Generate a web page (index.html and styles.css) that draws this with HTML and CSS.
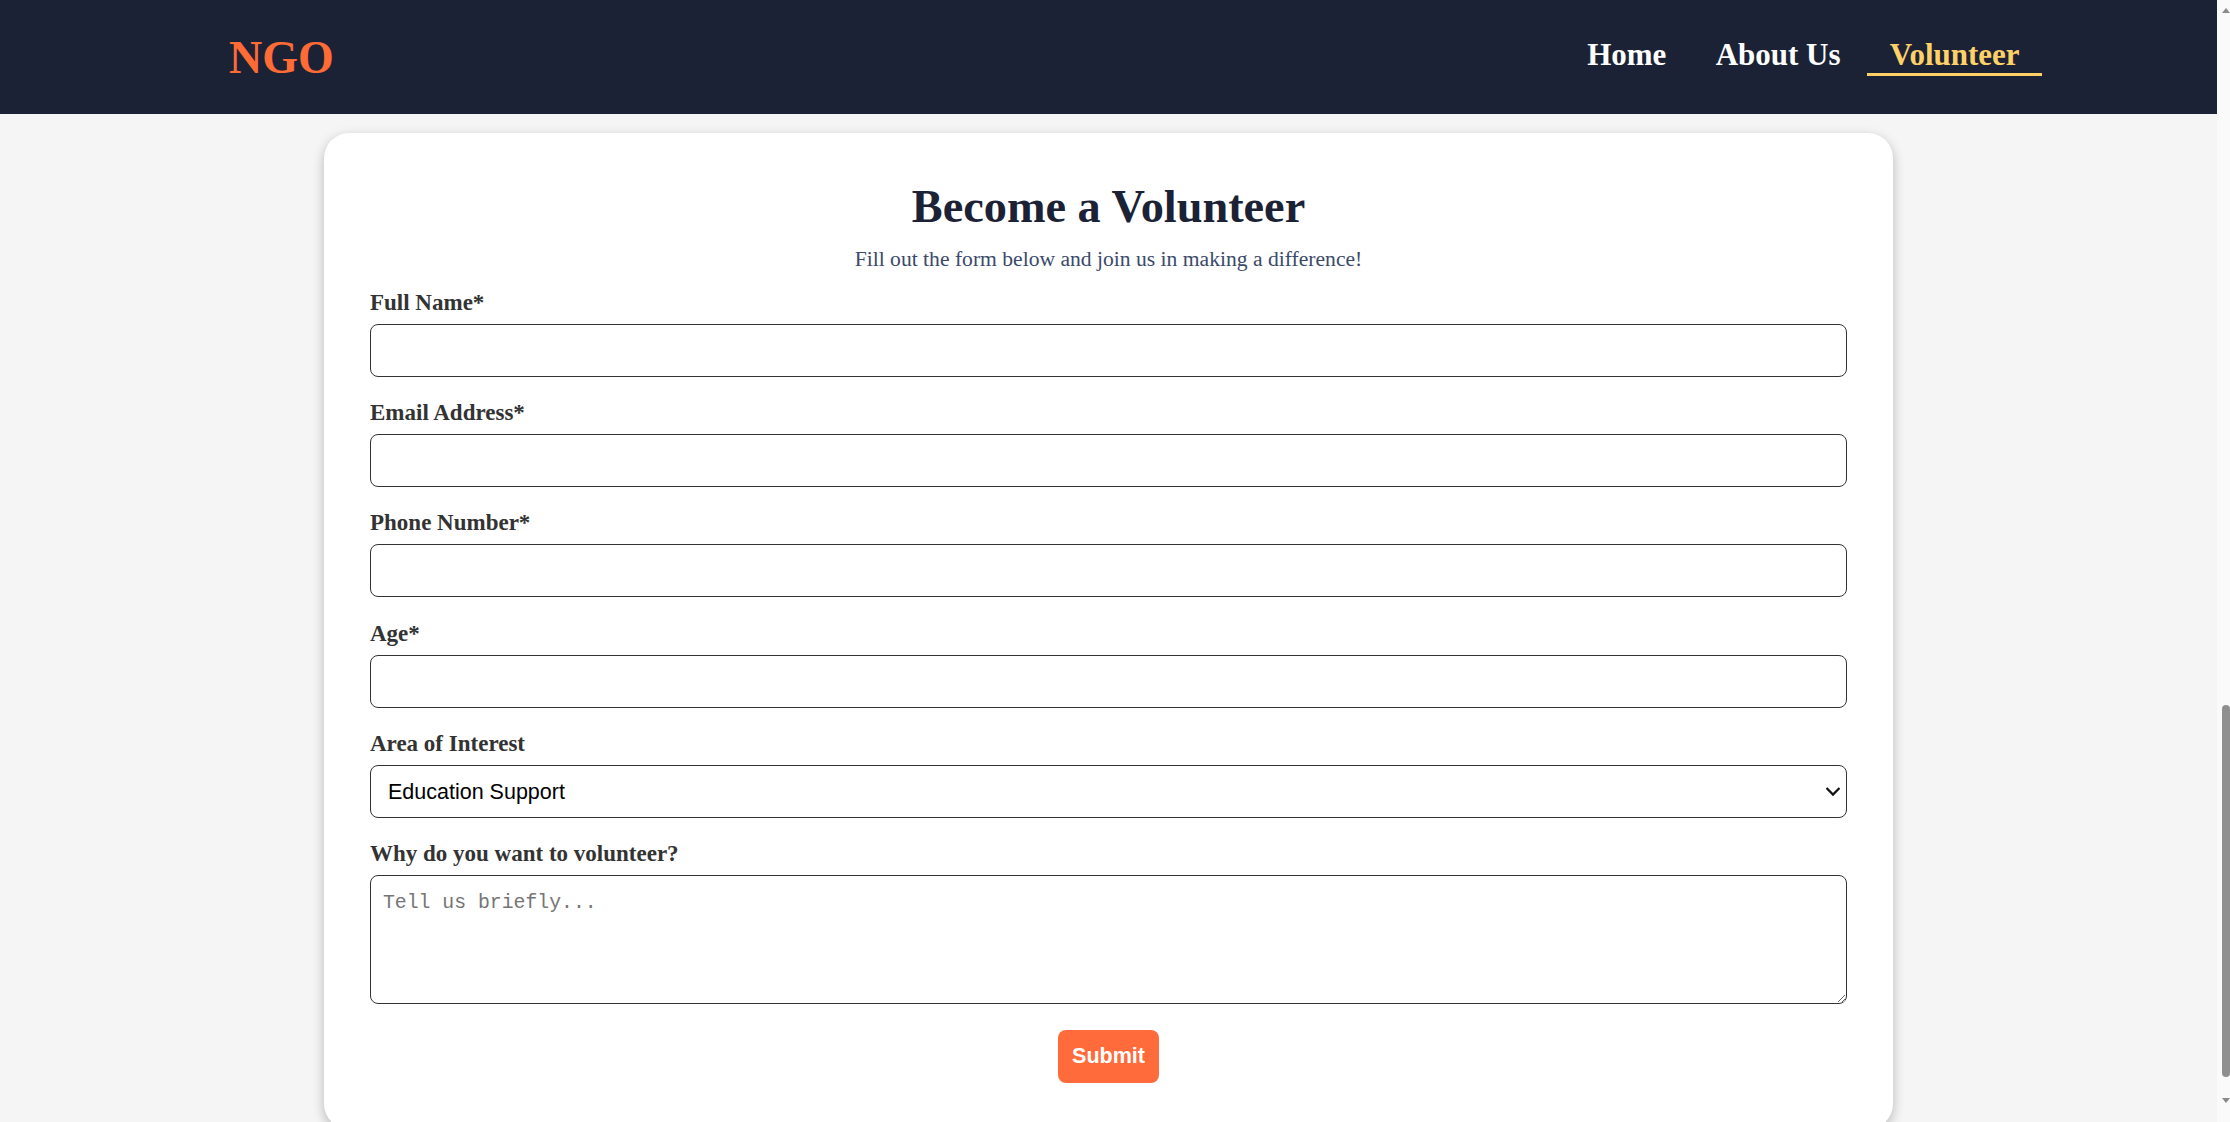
FILE: index.html
```html
<!DOCTYPE html>
<html lang="en">
<head>
  <meta charset="UTF-8">
  <title>Become a Volunteer - NGO</title>
  <link rel="stylesheet" href="styles.css">
</head>
<body>
  <div class="app">
    <div class="page">
      <header class="site-header">
        <div class="logo">NGO</div>
        <nav class="main-nav">
          <a href="#" class="nav-link">Home</a>
          <a href="#" class="nav-link">About Us</a>
          <a href="#volunteer" class="nav-link active">Volunteer</a>
        </nav>
      </header>

      <main>
        <section id="volunteer" class="volunteer-section">
          <div class="form-card">
            <h2 class="form-title">Become a Volunteer</h2>
            <p class="form-subtitle">Fill out the form below and join us in making a difference!</p>
            <form class="volunteer-form">
              <div class="form-group">
                <label for="fullname">Full Name*</label>
                <input type="text" id="fullname" class="field" required>
              </div>
              <div class="form-group">
                <label for="email">Email Address*</label>
                <input type="email" id="email" class="field" required>
              </div>
              <div class="form-group">
                <label for="phone">Phone Number*</label>
                <input type="tel" id="phone" class="field" required>
              </div>
              <div class="form-group">
                <label for="age">Age*</label>
                <input type="number" id="age" class="field" required>
              </div>
              <div class="form-group">
                <label for="interest">Area of Interest</label>
                <div class="select-wrap">
                  <select id="interest" class="field select-field">
                    <option>Education Support</option>
                    <option>Healthcare</option>
                    <option>Environment</option>
                    <option>Community Outreach</option>
                  </select>
                  <svg class="select-arrow" width="14" height="10" viewBox="0 0 14 10" aria-hidden="true">
                    <path d="M1.3 1.8 L7 7.6 L12.7 1.8" fill="none" stroke="#111" stroke-width="2.2" stroke-linecap="square"/>
                  </svg>
                </div>
              </div>
              <div class="form-group">
                <label for="reason">Why do you want to volunteer?</label>
                <textarea id="reason" class="field text-field" placeholder="Tell us briefly..."></textarea>
              </div>
              <div class="form-actions">
                <button type="submit" class="submit-btn">Submit</button>
              </div>
            </form>
          </div>
        </section>
      </main>
    </div>

    <div class="scroll-rail" aria-hidden="true">
      <span class="rail-arrow"><span class="tri tri-up"></span></span>
      <span class="rail-track"><span class="rail-thumb"></span></span>
      <span class="rail-arrow"><span class="tri tri-down"></span></span>
    </div>
  </div>
</body>
</html>
```

FILE: styles.css
```css
* {
  box-sizing: border-box;
}

body {
  margin: 0;
  background: #f5f5f5;
  font-family: "Liberation Serif", "Times New Roman", serif;
  color: #333;
}

.app {
  display: flex;
  align-items: flex-start;
}

.page {
  flex: 1;
  min-width: 0;
}

/* header */
.site-header {
  height: 114px;
  display: flex;
  align-items: center;
  justify-content: space-between;
  padding: 0 175px 0 229px;
  background: #1b2236;
}

.logo {
  font-size: 46px;
  font-weight: 700;
  color: #ff6b35;
}

.main-nav {
  display: flex;
  align-items: center;
  gap: 4.5px;
}

.nav-link {
  display: inline-block;
  padding: 0 22.4px;
  font-size: 31px;
  font-weight: 700;
  line-height: 1.107;
  color: #ffffff;
  text-decoration: none;
  border-bottom: 3px solid transparent;
}

.nav-link.active {
  color: #ffd166;
  border-bottom-color: #ffd166;
}

/* form card */
.volunteer-section {
  padding: 19px 0 0;
}

.form-card {
  width: 1569px;
  margin: 0 auto;
  padding: 46.5px 46px 46px;
  background: #ffffff;
  border-radius: 25px;
  box-shadow: 0 4px 12px rgba(0, 0, 0, 0.25);
}

.form-title {
  margin: 0 0 14.6px;
  text-align: center;
  font-size: 46.3px;
  font-weight: 700;
  color: #1b2236;
}

.form-subtitle {
  margin: 0 0 17.8px;
  text-align: center;
  font-size: 21.6px;
  color: #3b4a6b;
}

.form-group {
  margin-bottom: 23.3px;
}

.form-group label {
  display: block;
  margin-bottom: 8px;
  font-size: 23px;
  font-weight: 700;
  color: #333;
}

.field {
  display: block;
  width: 100%;
  height: 53px;
  margin: 0;
  padding: 0 13px;
  font-family: "Liberation Sans", Arial, sans-serif;
  font-size: 21.5px;
  color: #000;
  background: #fff;
  border: 1px solid #333;
  border-radius: 8px;
  outline: none;
}

.select-wrap {
  position: relative;
}

.select-field {
  appearance: none;
  -webkit-appearance: none;
  padding-left: 17px;
}

.select-arrow {
  position: absolute;
  right: 7px;
  top: 50%;
  transform: translateY(-50%);
  pointer-events: none;
}

.text-field {
  height: 128.5px;
  padding: 16px 12px;
  font-family: "Liberation Mono", "Courier New", monospace;
  font-size: 19.8px;
  resize: vertical;
}

.text-field::placeholder {
  color: #757575;
}

.form-actions {
  padding-top: 3.3px;
  text-align: center;
}

.submit-btn {
  height: 53px;
  padding: 0 14px;
  font-family: "Liberation Sans", Arial, sans-serif;
  font-size: 21.5px;
  font-weight: 700;
  color: #ffffff;
  background: #ff6b3b;
  border: none;
  border-radius: 8px;
  cursor: pointer;
}

/* window scrollbar strip, scrolled to the bottom */
.scroll-rail {
  flex: 0 0 13px;
  width: 13px;
  height: 100vh;
  display: flex;
  flex-direction: column;
  padding-bottom: 12px;
  background: #fafafa;
}

.rail-arrow {
  height: 20px;
  display: flex;
  align-items: center;
  justify-content: center;
  padding-left: 5px;
}

.tri {
  width: 0;
  height: 0;
  border-left: 4px solid transparent;
  border-right: 4px solid transparent;
}

.tri-up {
  border-bottom: 5px solid #8a8a8a;
}

.tri-down {
  border-top: 5px solid #8a8a8a;
}

.rail-track {
  flex: 1;
  display: flex;
  flex-direction: column;
  justify-content: flex-end;
  padding: 0 0 13px 5px;
}

.rail-thumb {
  width: 8px;
  height: 372px;
  border-radius: 4px;
  background: #8f8f8f;
}
```
